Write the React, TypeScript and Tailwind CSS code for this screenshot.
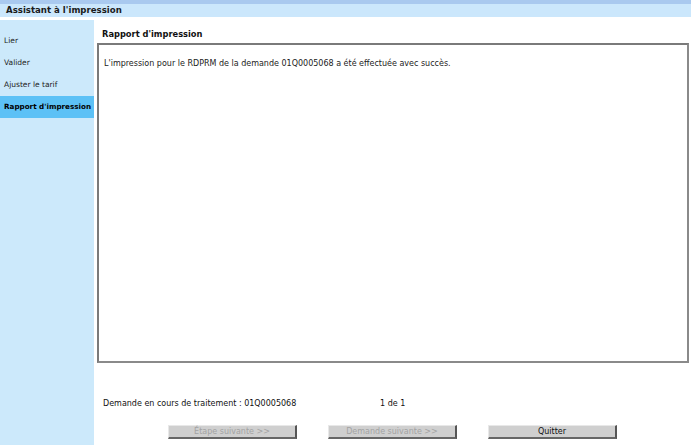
import React from "react";

const font = { fontFamily: '"DejaVu Sans", Verdana, sans-serif' };

function Btn({ label, disabled }: { label: string; disabled?: boolean }) {
  return (
    <div
      className={`w-[129px] h-[14px] flex items-center justify-center bg-[#cfcfcf] border-t border-l border-t-[#e8e8e8] border-l-[#e8e8e8] border-r-2 border-b-2 border-r-[#555] border-b-[#666] text-[8px] ${
        disabled ? "text-[#a3a3a3]" : "text-[#111]"
      }`}
    >
      {label}
    </div>
  );
}

export default function App() {
  return (
    <div className="w-[691px] h-[445px] bg-white flex flex-col overflow-hidden" style={font}>
      <div className="h-[4px] bg-[#a9c9ef]" />
      <div className="h-[13px] bg-[#cbe7fc] flex items-center pl-[6px]">
        <span className="text-[8.6px] font-bold text-[#1a1a1a] leading-none whitespace-nowrap">Assistant à l'impression</span>
      </div>
      <div className="h-[3px] bg-white" />
      <div className="flex flex-1">
        <div className="w-[94px] bg-[#cce9fb] flex flex-col pt-[10px]">
          <div className="h-[22px] flex items-center pl-[4px] text-[7.5px] text-[#222]">Lier</div>
          <div className="h-[22px] flex items-center pl-[4px] text-[7.5px] text-[#222]">Valider</div>
          <div className="h-[22px] flex items-center pl-[4px] text-[7.5px] text-[#222]">Ajuster le tarif</div>
          <div className="h-[22px] flex items-center pl-[4px] text-[7.2px] font-bold text-black bg-[#5cc1f6] whitespace-nowrap">
            Rapport d'impression
          </div>
        </div>
        <div className="flex-1 flex flex-col pl-[3px] pr-[2px]">
          <div className="h-[23px] flex items-end pb-[5px] pl-[5px]">
            <span className="text-[8.3px] font-bold text-[#111] leading-none whitespace-nowrap">Rapport d'impression</span>
          </div>
          <div className="h-[320px] border-2 border-t-[#7a7a7a] border-l-[#7a7a7a] border-r-[#8a8a8a] border-b-[#8a8a8a] pl-[5px] pt-[4px]">
            <span className="text-[8px] text-[#222]">
              L'impression pour le RDPRM de la demande 01Q0005068 a été effectuée avec succès.
            </span>
          </div>
          <div className="h-[32px]" />
          <div className="flex items-center h-[18px] pl-[6px] text-[8px] text-[#111]">
            <span className="w-[277px]">Demande en cours de traitement : 01Q0005068</span>
            <span>1 de 1</span>
          </div>
          <div className="h-[12px]" />
          <div className="flex pl-[71px] gap-[31px]">
            <Btn label="Étape suivante >>" disabled />
            <Btn label="Demande suivante >>" disabled />
            <Btn label="Quitter" />
          </div>
        </div>
      </div>
    </div>
  );
}
